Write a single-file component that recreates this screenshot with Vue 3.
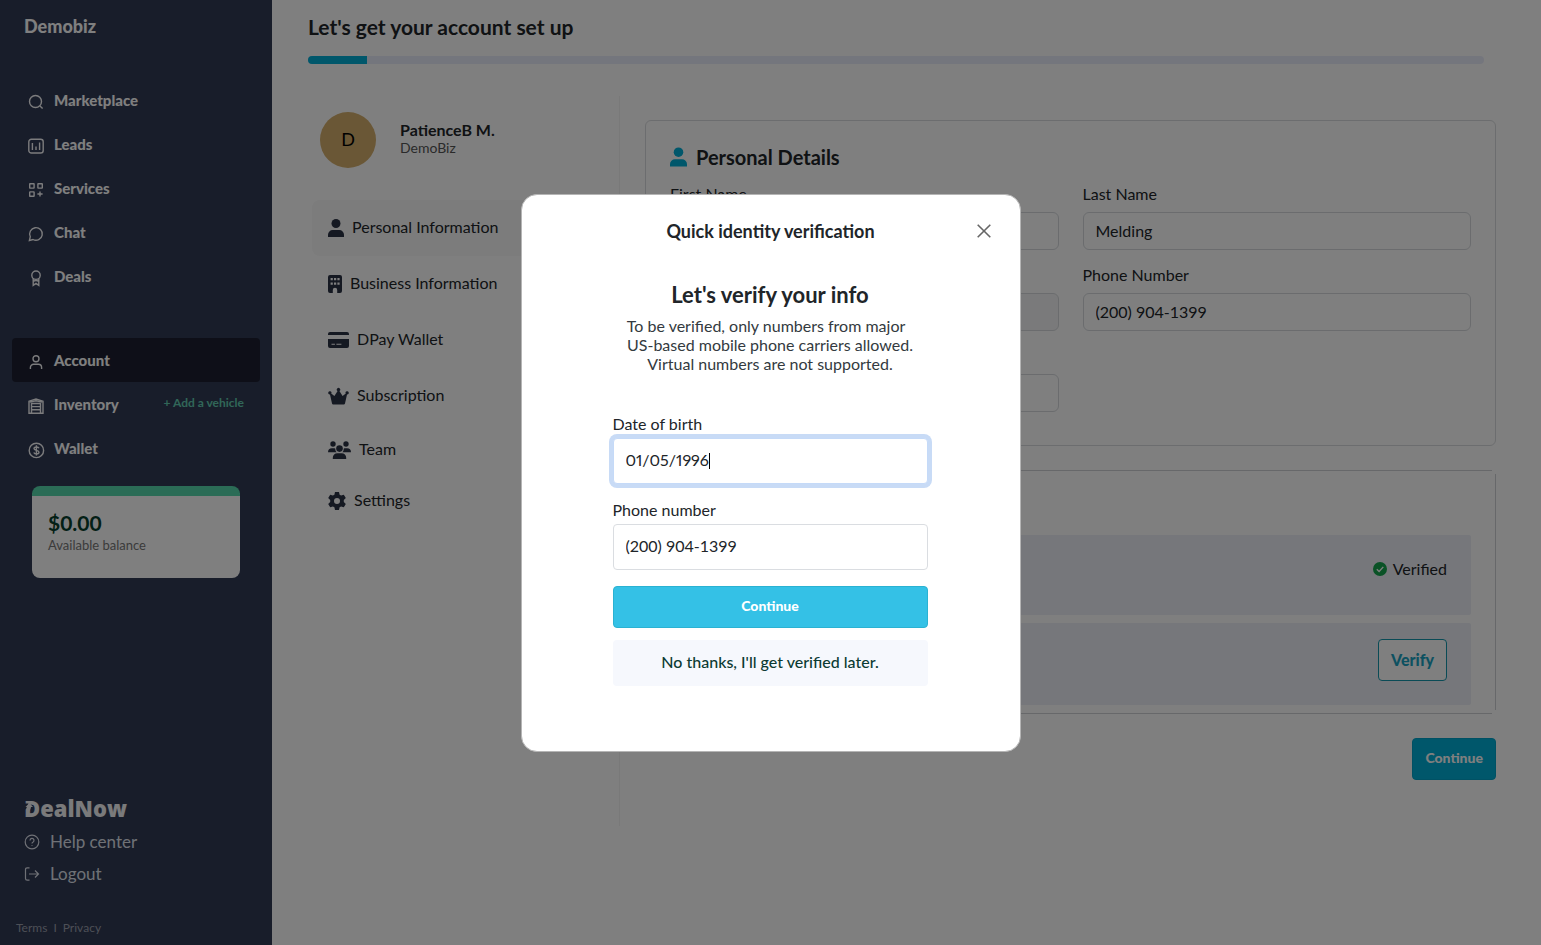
<script setup>
import { onMounted, ref } from 'vue'

const mainNav = [
  { label: 'Marketplace', icon: 'search' },
  { label: 'Leads', icon: 'leads' },
  { label: 'Services', icon: 'services' },
  { label: 'Chat', icon: 'chat' },
  { label: 'Deals', icon: 'deals' },
]
const accountNav = [
  { label: 'Account', icon: 'account', active: true },
  { label: 'Inventory', icon: 'inventory', action: '+ Add a vehicle' },
  { label: 'Wallet', icon: 'wallet' },
]
const icons = {
  search: '<circle cx="7.500" cy="7.500" r="6"/><path d="M12 12l2.600 2.600"/>',
  leads: '<rect x=".8" y="1.200" width="14.400" height="13.800" rx="2.600"/><path d="M4.400 5v7M8 8.600V12M11.600 4.400V12"/>',
  services: '<rect x="1.700" y="1.700" width="4.400" height="4.400" rx=".4"/><rect x="9.900" y="1.700" width="4.400" height="4.400" rx=".4"/><rect x="1.700" y="9.900" width="4.400" height="4.400" rx=".4"/><path d="M12 9.400v5.200M9.400 12h5.200"/>',
  chat: '<path d="M1.400 14.500l.9-3.800A6.300 6.300 0 1 1 5 13.500z"/>',
  deals: '<circle cx="8" cy="5.200" r="4.200"/><path d="M5.200 8.600V15.400L8 13.400l2.800 2V8.600M5.200 11.500Q8 9.400 10.800 11.500"/>',
  account: '<circle cx="8" cy="4.700" r="3"/><path d="M2.400 15v-1.600a3.200 3.200 0 0 1 3.200-3.200h4.800a3.200 3.200 0 0 1 3.200 3.200V15"/>',
  inventory: '<path d="M1 15.300V3.200L8 1l7 2.200v12.100z"/><path d="M3.500 15V5.500h9V15M3.500 8.600h9M3.500 11.800h9M1.500 4L8 2.800 14.500 4"/>',
  wallet: '<circle cx="8.400" cy="8.400" r="7.200"/><path d="M11 6.300C10.500 4.800 6 4.300 6 6.600c0 2.200 5 1.300 5 3.600 0 2.200-4.500 2-5.200.2M8.400 3.300v10.200"/>',
}
const sections = [
  { label: 'Personal Information', icon: 'user', w: 16, active: true },
  { label: 'Business Information', icon: 'building', w: 14 },
  { label: 'DPay Wallet', icon: 'card', w: 21 },
  { label: 'Subscription', icon: 'crown', w: 21 },
  { label: 'Team', icon: 'team', w: 23, compact: true },
  { label: 'Settings', icon: 'gear', w: 18, compact: true },
]
const glyphs = {
  user: '<circle cx="8" cy="4.500" r="4.500"/><path d="M0 18v-2.200a4.700 4.700 0 0 1 4.700-4.700h6.600a4.700 4.700 0 0 1 4.700 4.700V18z"/>',
  building: '<path fill-rule="evenodd" d="M2 0h10q2 0 2 2v14q0 2-2 2H9.200v-3a2.200 2.200 0 0 0-4.400 0v3H2q-2 0-2-2V2q0-2 2-2zM2.600 3v2.200h2.200V3zM6 3v2.200h2.200V3zM9.400 3v2.200h2.200V3zM2.600 7.600v2.200h2.200V7.600zM6 7.600v2.200h2.200V7.600zM9.400 7.600v2.200h2.200V7.600z"/>',
  card: '<path fill-rule="evenodd" d="M2 1h17q2 0 2 2v1H0V3q0-2 2-2zM0 8h21v7q0 2-2 2H2q-2 0-2-2zM3.500 12.700v1h3.400v-1zM8.400 12.700v1h5v-1z"/>',
  crown: '<path d="M4 16.600L2 7.400A1.600 1.600 0 1 1 3.200 6.600L6.400 9 9.600 4a1.700 1.700 0 1 1 1.800 0L14.600 9l3.200-2.400a1.600 1.600 0 1 1 1.200.8L17 16.600q-.3 1-1.200 1H5.200q-1 0-1.200-1z"/>',
  team: '<circle cx="5" cy="3" r="2.700"/><circle cx="18" cy="3" r="2.700"/><circle cx="11.500" cy="7.600" r="3.300"/><path d="M0 11.200A4 4 0 0 1 4 7.200h2.400q.4 0 .8.200 0 2.400 1.500 3.800zM23 11.200a4 4 0 0 0-4-4h-2.400q-.4 0-.8.200 0 2.400-1.500 3.800zM4.800 18v-1.200a4.500 4.500 0 0 1 4.500-4.500h4.400a4.500 4.500 0 0 1 4.500 4.500V18z"/>',
  gear: '<path fill-rule="evenodd" d="M7 0h4l.6 2.700 1.500.9 2.700-.9 2 3.400-2 1.900v2l2 1.900-2 3.400-2.700-.9-1.500.9L11 18H7l-.6-2.700-1.500-.9-2.700.9-2-3.400 2-1.900V8l-2-1.900 2-3.400 2.700.9 1.500-.9zM9 6a3 3 0 1 0 0 6 3 3 0 0 0 0-6z"/>',
}

const birthDate = ref('01/05/1996')
const phone = ref('(200) 904-1399')
const lastName = ref('Melding')
const birthInput = ref(null)

onMounted(() => {
  birthInput.value.focus()
  birthInput.value.setSelectionRange(10, 10)
})
</script>

<template>
  <div class="app">
    <aside class="sidebar">
      <div class="brand">Demobiz</div>
      <nav class="nav">
        <a v-for="item in mainNav" :key="item.label" href="#" class="nav-link">
          <svg class="nav-icon" viewBox="0 0 16 16" v-html="icons[item.icon]"></svg>
          <span>{{ item.label }}</span>
        </a>
      </nav>
      <nav class="nav nav-account">
        <div v-for="item in accountNav" :key="item.label" class="nav-row" :class="{ active: item.active }">
          <a href="#" class="nav-link">
            <svg class="nav-icon" viewBox="0 0 16 16" v-html="icons[item.icon]"></svg>
            <span>{{ item.label }}</span>
          </a>
          <a v-if="item.action" href="#" class="nav-action">{{ item.action }}</a>
        </div>
      </nav>
      <section class="balance">
        <strong>$0.00</strong>
        <span>Available balance</span>
      </section>
      <footer class="side-foot">
        <div class="logo">
          DealNow
          <svg class="logo-cut" viewBox="0 0 12 18"><path class="gap" d="M0 3.500h4.500L2 9 0 10z" /><path class="arrow" d="M1.500 7L5.500 3 9 7H7Q6.500 11 3 12.500V10Q4 9 4 7z" /></svg>
        </div>
        <a href="#" class="foot-link">
          <svg viewBox="0 0 16 16"><circle cx="8" cy="8" r="6.800" /><path d="M6 6.400a2 2 0 1 1 2.900 1.800q-.9.500-.9 1.300M8 11.200v.9" /></svg>
          Help center
        </a>
        <a href="#" class="foot-link">
          <svg viewBox="0 0 16 16"><path d="M5.500 1.800H3.200q-1.700 0-1.700 1.700v9q0 1.700 1.700 1.700h2.300M5 8h9.500M11 4.500L14.500 8 11 11.500" /></svg>
          Logout
        </a>
        <div class="legal"><a href="#">Terms</a><span>I</span><a href="#">Privacy</a></div>
      </footer>
    </aside>

    <main class="main">
      <h1>Let's get your account set up</h1>
      <div class="progress" role="progressbar" aria-label="Account setup" aria-valuenow="5" aria-valuemin="0" aria-valuemax="100"><div class="bar"></div></div>
      <div class="columns">
        <div class="profile">
          <div class="person">
            <div class="avatar">D</div>
            <div>
              <div class="person-name">PatienceB M.</div>
              <div class="person-biz">DemoBiz</div>
            </div>
          </div>
          <nav class="sections">
            <a v-for="s in sections" :key="s.label" href="#" class="section-link" :class="{ active: s.active, compact: s.compact }">
              <svg :width="s.w" height="18" :viewBox="`0 0 ${s.w} 18`" v-html="glyphs[s.icon]"></svg>
              {{ s.label }}
            </a>
          </nav>
        </div>

        <div class="details">
          <section class="card">
            <h2><svg width="17" height="20" viewBox="0 0 16 18" v-html="glyphs.user"></svg>Personal Details</h2>
            <div class="form">
              <div class="field"><label for="first">First Name</label><input id="first" type="text" /></div>
              <div class="field"><label for="last">Last Name</label><input id="last" v-model="lastName" type="text" /></div>
              <div class="field"><label for="email">Email</label><input id="email" type="email" disabled /></div>
              <div class="field"><label for="tel">Phone Number</label><input id="tel" v-model="phone" type="tel" /></div>
              <div class="field"><label for="zip">Zip Code</label><input id="zip" type="text" /></div>
            </div>
          </section>
          <section class="checks">
            <div class="check-row">
              <span class="verified">
                <svg viewBox="0 0 14 14"><circle cx="7" cy="7" r="7" /><path d="M3.800 7.200l2.300 2.300 4.200-4.600" /></svg>
                Verified
              </span>
            </div>
            <div class="check-row"><button type="button" class="verify">Verify</button></div>
          </section>
          <button type="button" class="primary next">Continue</button>
        </div>
      </div>
    </main>

    <div class="overlay">
      <div class="modal" role="dialog" aria-modal="true" aria-labelledby="modal-title">
        <header class="modal-head">
          <h2 id="modal-title">Quick identity verification</h2>
          <button type="button" class="close" aria-label="Close"><svg viewBox="0 0 14 14"><path d="M.7.7l12.600 12.600M13.300.7L.7 13.300" /></svg></button>
        </header>
        <form class="modal-body" @submit.prevent>
          <h3>Let's verify your info</h3>
          <p>To be verified, only numbers from major&nbsp;&nbsp;<br />US-based mobile phone carriers allowed.<br />Virtual numbers are not supported.</p>
          <div class="modal-field">
            <label for="dob">Date of birth</label>
            <div class="caret-box">
              <input id="dob" ref="birthInput" v-model="birthDate" type="text" />
              <i class="caret"></i>
            </div>
          </div>
          <div class="modal-field">
            <label for="mobile">Phone number</label>
            <input id="mobile" v-model="phone" type="tel" />
          </div>
          <button type="submit" class="primary submit">Continue</button>
          <button type="button" class="later">No thanks, I'll get verified later.</button>
        </form>
      </div>
    </div>
  </div>
</template>

<style>
body { margin: 0; background: #fff; }
</style>

<style scoped>
* { box-sizing: border-box; }
.app { display: flex; min-height: 100vh; font: 16px/20px Lato, "Open Sans", sans-serif; color: #212529; }
a { color: inherit; text-decoration: none; }
button, input { font: inherit; color: inherit; }
h1, h2, h3, p { margin: 0; }

.sidebar { flex: 0 0 272px; display: flex; flex-direction: column; background: #303a55; color: #fff; }
.brand { padding: 16px 24px 42px; font-size: 18px; font-weight: 900; }
.nav { display: flex; flex-direction: column; padding: 0 12px; }
.nav-account { margin-top: 40px; }
.nav-row { display: flex; align-items: center; justify-content: space-between; padding-right: 16px; border-radius: 4px; }
.nav-row.active { background: #1c1f30; }
.nav-link { display: flex; align-items: center; gap: 10px; height: 44px; padding-left: 16px; font-size: 15px; font-weight: 900; }
.nav-icon { width: 16px; height: 16px; margin-top: 3px; fill: none; stroke: #f8f8fa; stroke-width: 1.4; overflow: visible; }
.nav-action { padding-bottom: 2px; font-size: 12px; font-weight: 700; color: #62cdb0; }
.balance { display: flex; flex-direction: column; margin: 16px 32px 0; padding: 17px 16px 23px; border-top: 10px solid #56d8ac; border-radius: 8px; background: #fff; }
.balance strong { color: #06402c; font-size: 21px; }
.balance span { margin-top: 2px; font-size: 13px; color: #777; }
.side-foot { margin-top: auto; padding: 0 24px 7px; }
.logo { position: relative; height: 28px; font: 800 22px/28px "Open Sans", sans-serif; color: #f4f4f6; }
.logo-cut { position: absolute; left: 0; top: 6px; width: 12px; height: 18px; }
.gap { fill: #303a55; }
.arrow { fill: #f4f4f6; }
.foot-link { display: flex; align-items: center; gap: 10px; height: 32px; font-size: 17px; color: #dfe2ec; }
.foot-link:first-of-type { margin-top: 4px; }
.foot-link svg { width: 16px; height: 16px; fill: none; stroke: currentColor; stroke-width: 1.2; }
.legal { display: flex; gap: 6px; margin: 28px 0 0 -8px; font-size: 12px; color: #9a9fac; }

.main { flex: 1; min-width: 0; padding: 15px 45px 0 36px; }
h1 { font-size: 21px; line-height: 24px; font-weight: 700; }
.progress { height: 8px; margin: 17px 12px 32px 0; border-radius: 4px; overflow: hidden; background: #e9ecfa; }
.bar { width: 5%; height: 8px; background: #00aed6; }
.columns { display: flex; gap: 25px; }
.profile { flex: 0 0 312px; min-height: 730px; padding: 16px 0 0 4px; border-right: 1px solid #f3f3f3; }
.person { display: flex; align-items: center; gap: 24px; margin-bottom: 32px; padding-left: 8px; }
.avatar { display: grid; place-items: center; width: 56px; height: 56px; padding-bottom: 2px; border-radius: 50%; background: #d4ae6c; color: #000; font-size: 18px; }
.person-name { font-weight: 700; line-height: 18px; }
.person-biz { padding-bottom: 2px; font-size: 14px; line-height: 18px; color: #555; }
.sections { display: flex; flex-direction: column; margin-right: 12px; }
.section-link { display: flex; align-items: center; gap: 8px; height: 56px; padding: 0 0 2px 16px; border-radius: 8px; }
.section-link.compact { height: 51px; }
.section-link.active { background: #f8f8f8; }
.section-link svg { margin-top: 2px; fill: #2b3245; }
.details { flex: 1; min-width: 0; display: flex; flex-direction: column; padding-top: 24px; }
.card { padding: 24px; border: 1px solid #d9dbde; border-radius: 6px; }
.card h2 { display: flex; align-items: center; gap: 9px; height: 24px; margin-bottom: 15px; font-size: 20px; font-weight: 700; }
.card h2 svg { fill: #00aed6; }
.form { display: grid; grid-template-columns: 1fr 1fr; gap: 15px 24px; padding-bottom: 9px; }
.field { display: flex; flex-direction: column; gap: 8px; }
.field input { width: 100%; height: 38px; padding: 0 12px 2px; border: 1px solid #d6d9dd; border-radius: 6px; background: #fff; }
.field input:disabled { background: #f5f5f6; }
.checks {
  --line: linear-gradient(#cfd1d4, #cfd1d4);
  display: flex; flex-direction: column; gap: 8px; margin-top: 24px; padding: 65px 25px 9px;
  background:
    var(--line) center top / calc(100% - 8px) 1px no-repeat,
    var(--line) center bottom / calc(100% - 8px) 1px no-repeat,
    var(--line) left center / 1px calc(100% - 8px) no-repeat,
    var(--line) right center / 1px calc(100% - 8px) no-repeat;
}
.check-row { display: flex; align-items: flex-start; justify-content: flex-end; min-height: 80px; padding: 16px 24px; border-radius: 2px; background: #edeff6; }
.check-row:last-child { min-height: 82px; }
.verified { display: flex; align-items: center; gap: 6px; padding-top: 8px; }
.verified svg { width: 14px; height: 14px; fill: #14a44d; }
.verified path { fill: none; stroke: #fff; stroke-width: 1.4; }
.verify { height: 42px; padding: 0 12px; border: 1px solid #1596ac; border-radius: 4px; background: #fff; color: #1aa3c2; font-weight: 900; }
.primary { height: 42px; padding: 0 12px 2px; border: 1px solid #00a3c9; border-radius: 4px; background: #00aed6; color: #fff; font-size: 14px; font-weight: 900; }
.next { align-self: flex-end; margin-top: 24px; }

.overlay { position: fixed; inset: 0; display: flex; align-items: center; justify-content: center; background: rgba(0, 0, 0, 0.5); }
.modal { width: 500px; border: 1px solid #b5b5b5; border-radius: 16px; background: #fff; }
.modal-head { display: grid; grid-template-columns: 1fr auto 1fr; align-items: center; padding: 24px 28px 0; }
.modal-head h2 { grid-column: 2; font-size: 18px; line-height: 24px; }
.close { justify-self: end; display: grid; place-items: center; width: 16px; height: 16px; padding: 0; border: 0; background: none; }
.close svg { width: 14px; height: 14px; stroke: #666; stroke-width: 1.6; }
.modal-body { display: flex; flex-direction: column; padding: 38px 92px 65px 91px; }
h3 { font-size: 22px; line-height: 28px; text-align: center; }
p { margin: 7px 0 41px; line-height: 19px; text-align: center; white-space: nowrap; color: #333a40; }
.modal-field { display: flex; flex-direction: column; gap: 4px; margin-bottom: 16px; }
.modal-field input { width: 100%; height: 46px; padding: 0 12px 2px; border: 1px solid #dadde1; border-radius: 4px; background: #fff; outline: none; }
.modal-field input:focus { border-color: #c5daf8; box-shadow: 0 0 0 4px #c8dbf6; }
.caret-box { position: relative; display: flex; }
#dob { font-variant-numeric: proportional-nums; caret-color: transparent; }
.caret { position: absolute; left: 96px; top: 15px; width: 1px; height: 16px; background: #000; }
.submit { border-color: #2ab2d2; background: #34c1e6; }
.later { height: 46px; margin-top: 12px; padding-bottom: 2px; border: 0; border-radius: 4px; background: #f6f8fd; color: #0c3b33; font-weight: 500; }
</style>
